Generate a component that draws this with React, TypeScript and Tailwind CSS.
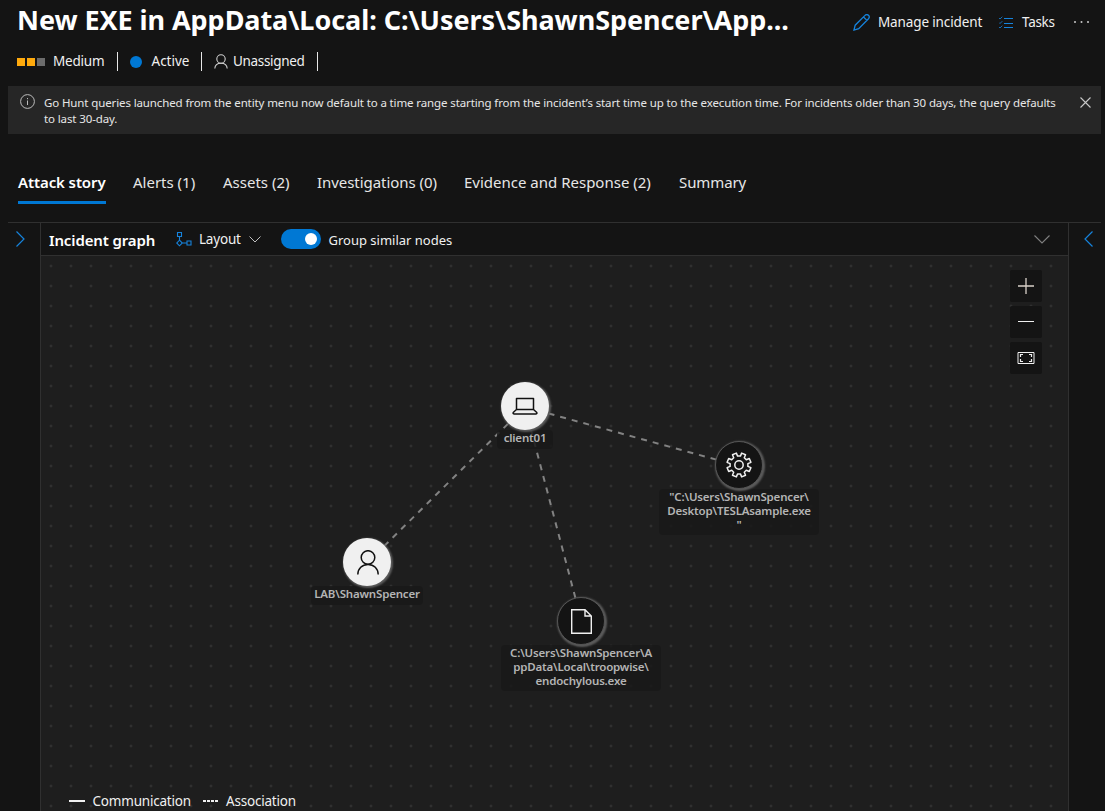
import React from "react";

const tabs = [
  { label: "Attack story", cls: "w-[88px] font-semibold text-white tracking-[-0.1px]", active: true },
  { label: "Alerts (1)", cls: "w-[63px]", active: false },
  { label: "Assets (2)", cls: "w-[67px]", active: false },
  { label: "Investigations (0)", cls: "w-[120px] tracking-[-0.05px]", active: false },
  { label: "Evidence and Response (2)", cls: "w-[188px]", active: false },
  { label: "Summary", cls: "w-[67px] tracking-[-0.1px]", active: false },
];

type NodeProps = {
  pos: string;
  light?: boolean;
  lines: string[];
  labelCls: string;
  children: React.ReactNode;
};

function GraphNode({ pos, light, lines, labelCls, children }: NodeProps) {
  return (
    <div className={`absolute flex w-[160px] flex-col items-center ${pos}`}>
      <div
        className={`relative z-10 flex h-[48px] w-[48px] items-center justify-center rounded-full shadow-[1px_1px_2px_1px_#5c5c5c] ${
          light ? "bg-[#f0f0f0] text-[#111]" : "border border-[#555] bg-[#141414] text-[#f0f0f0]"
        }`}
      >
        {children}
      </div>
      <div
        className={`rounded-[4px] bg-[#191919]/85 text-center text-[11.5px] font-semibold leading-[14px] tracking-[-0.18px] text-[#b4b4b4] ${labelCls}`}
      >
        {lines.map((l) => (
          <div key={l} className="whitespace-nowrap">
            {l}
          </div>
        ))}
      </div>
    </div>
  );
}

function Divider() {
  return <span className="h-[19px] w-px shrink-0 bg-[#e8e8e8]" />;
}

function Header() {
  return (
    <header className="flex h-[42px] items-start pl-[17px]">
      <h1 className="w-[775px] whitespace-nowrap text-[27px] font-bold leading-[40px] tracking-[-0.06px] text-white">
        New EXE in AppData\Local: C:\Users\ShawnSpencer\App...
      </h1>
      <div className="flex h-[44px] items-center pl-[61px] text-[14px] text-[#f0f0f0]">
        <svg className="h-[17px] w-[17px] text-[#1683dc]" viewBox="0 0 17 17" fill="none" stroke="currentColor" strokeWidth="1.300">
          <path d="M1 16l1.200-4.800L12 1.400a2.300 2.300 0 0 1 3.500 3.300L5.700 14.600zM10.500 3l3.500 3.400" />
        </svg>
        <span className="ml-[8px] w-[104px] whitespace-nowrap text-[13.5px] tracking-[-0.13px]">Manage incident</span>
        <svg className="ml-[17px] h-[13px] w-[14px] text-[#1683dc]" viewBox="0 0 14 13" fill="none" stroke="currentColor">
          <path d="M5 2.500h9M5 7.500h9M5 11.500h9" />
          <path d="M0 2l1 1 2.300-2.300M0 6.500l1 1 2.300-2.300M0 11l1 1 2.300-2.300" strokeWidth=".8" />
        </svg>
        <span className="ml-[9px] w-[33px] whitespace-nowrap text-[13.5px] tracking-[-0.3px]">Tasks</span>
        <svg className="ml-[18px] h-[4px] w-[18px] fill-[#c8c8c8]" viewBox="0 0 18 4">
          <circle cx="2" cy="2" r="1" />
          <circle cx="8.500" cy="2" r="1" />
          <circle cx="15" cy="2" r="1" />
        </svg>
      </div>
    </header>
  );
}

function StatusRow() {
  return (
    <div className="flex h-[38px] items-center pl-[17px] text-[13.5px] text-[#f0f0f0]">
      <span className="mt-px flex gap-[2px]">
        <i className="h-2 w-2 bg-[#ffaa0d]" />
        <i className="h-2 w-2 bg-[#ffaa0d]" />
        <i className="h-2 w-2 bg-[#6c6c6c]" />
      </span>
      <span className="ml-2 w-[64px] tracking-[-0.2px]">Medium</span>
      <Divider />
      <i className="ml-[12px] mt-px h-[12px] w-[12px] rounded-full bg-[#0078d4]" />
      <span className="ml-[9.500px] w-[49.500px]">Active</span>
      <Divider />
      <svg className="ml-[12px] h-[15px] w-[14px]" viewBox="0 0 14 15" fill="none" stroke="#d0d0d0" strokeWidth="1.1">
        <circle cx="7" cy="5" r="4.200" />
        <path d="M.8 14.500C1 11.200 3.500 9.200 7 9.200s6 2 6.200 5.300" />
      </svg>
      <span className="ml-[5px] w-[84px] tracking-[-0.32px]">Unassigned</span>
      <Divider />
    </div>
  );
}

function Banner() {
  return (
    <div className="ml-2 mr-1 mt-[6px] flex h-[48px] bg-[#262626] text-[#e6e6e6]">
      <svg className="ml-[12px] mt-[8px] h-[15px] w-[15px]" viewBox="0 0 15 15" fill="none" stroke="#bdbdbd">
        <circle cx="7.500" cy="7.500" r="6.900" />
        <path d="M7.500 6.500v4.500M7.500 4v1.200" />
      </svg>
      <p className="ml-[9px] mt-[9px] w-[1030px] whitespace-nowrap text-[11.5px] leading-[16px] tracking-[-0.118px]">
        Go Hunt queries launched from the entity menu now default to a time range starting from the incident’s start
        time up to the execution time. For incidents older than 30 days, the query defaults
        <br />
        to last 30-day.
      </p>
      <svg className="ml-[6px] mt-[11px] h-[11px] w-[11px]" viewBox="0 0 11 11" stroke="#c8c8c8" strokeWidth="1.1">
        <path d="M.5.5l10 10M10.500.5l-10 10" />
      </svg>
    </div>
  );
}

function Tabs() {
  return (
    <nav className="mt-[34px] flex h-[54px] gap-[27px] pl-[18px] text-[15px] text-[#e6e6e6]">
      {tabs.map((t) => (
        <div key={t.label} className={`flex h-[36px] flex-col whitespace-nowrap ${t.cls}`}>
          <span className="h-[33px] leading-[28px]">{t.label}</span>
          {t.active && <span className="h-[3px] bg-[#0078d4]" />}
        </div>
      ))}
    </nav>
  );
}

function Toolbar() {
  return (
    <div className="flex h-[33px] shrink-0 items-center border-b border-[#303030] pl-[8px] text-[13.5px] text-[#f0f0f0]">
      <span className="mt-[2px] w-[107px] whitespace-nowrap text-[15px] font-semibold tracking-[-0.13px] text-white">
        Incident graph
      </span>
      <svg className="ml-[20px] h-[16px] w-[16px] text-[#1683dc]" viewBox="0 0 16 16" fill="none" stroke="currentColor" strokeWidth="1.1">
        <path d="M1.500 1.500h4v4h-4zM11 10h4v4h-4zM3.500 5.500v3.800M6.300 12H11M3.500 9.200L6.300 12 3.500 14.800.7 12z" />
      </svg>
      <span className="ml-[7px] w-[43px] tracking-[-0.2px]">Layout</span>
      <svg className="ml-[7px] h-[7px] w-[12px]" viewBox="0 0 12 7" fill="none" stroke="#c0c0c0">
        <path d="M.5.5L6 6 11.500.5" />
      </svg>
      <span className="ml-[20px] flex h-[20px] w-[40px] items-center justify-end rounded-full bg-[#0078d4] pr-[4px]">
        <i className="h-[12px] w-[12px] rounded-full bg-white" />
      </span>
      <span className="ml-[7.500px] mt-[3px] whitespace-nowrap text-[13px]">Group similar nodes</span>
      <svg className="ml-auto mr-[18px] h-[9px] w-[16px]" viewBox="0 0 16 9" fill="none" stroke="#808080" strokeWidth="1.1">
        <path d="M.5.5L8 8 15.500.5" />
      </svg>
    </div>
  );
}

function ZoomControls() {
  const cls = "flex h-[32px] w-[32px] items-center justify-center rounded-[2px] bg-[#141414]";
  return (
    <div className="absolute right-[26px] top-[14px] flex flex-col gap-[4px]">
      <button className={cls}>
        <svg className="h-[16px] w-[16px]" viewBox="0 0 16 16" stroke="#d8d0c8" strokeWidth="1.3">
          <path d="M8 0v16M0 8h16" />
        </svg>
      </button>
      <button className={cls}>
        <svg className="h-[16px] w-[16px]" viewBox="0 0 16 16" stroke="#f0f0f0">
          <path d="M0 7.500h16" />
        </svg>
      </button>
      <button className={cls}>
        <svg className="h-[12px] w-[18px]" viewBox="0 0 18 12" fill="none" stroke="#f0f0f0">
          <path d="M1 .5h16v11H1z" />
          <path d="M3.500 5V2.500H6M12 2.500h2.500V5M14.500 7v2.500H12M6 9.500H3.500V7" strokeWidth="1.200" />
        </svg>
      </button>
    </div>
  );
}

function gearPath(teeth: number, outer: number, inner: number) {
  const pts: string[] = [];
  const step = (Math.PI * 2) / teeth;
  for (let i = 0; i < teeth; i++) {
    const a = (i + 0.5) * step - Math.PI / 2;
    [
      [-0.3, inner],
      [-0.22, outer],
      [0.22, outer],
      [0.3, inner],
    ].forEach(([o, r]) => {
      const t = a + o * step;
      pts.push(`${(13 + r * Math.cos(t)).toFixed(2)} ${(13 + r * Math.sin(t)).toFixed(2)}`);
    });
  }
  return `M${pts.join("L")}Z`;
}

function Canvas() {
  return (
    <div className="relative flex-1 overflow-hidden bg-[#1e1e1e] bg-[radial-gradient(circle,#303030_1px,transparent_1.8px)] bg-[size:20px_20px]">
      <svg className="absolute inset-0 h-full w-full" fill="none" stroke="#828282" strokeWidth="2" strokeDasharray="6 6">
        <path d="M326 307L484 151" />
        <path d="M540.500 365L484 151" />
        <path d="M698.500 210L484 151" />
      </svg>
      <GraphNode pos="left-[404px] top-[126px]" light lines={["client01"]} labelCls="px-[7px] pt-px pb-[4px]">
        <svg className="h-[20px] w-[26px]" viewBox="0 0 26 20" fill="none" stroke="currentColor" strokeWidth="1.500" strokeLinejoin="round">
          <path d="M4.500 2.500h17v11h-17zM4.500 13.500l-3.300 3c-.4.800.2 1.500 1 1.500h21.600c.800 0 1.400-.7 1-1.500l-3.300-3" />
        </svg>
      </GraphNode>
      <GraphNode pos="left-[246px] top-[282px]" light lines={["LAB\\ShawnSpencer"]} labelCls="w-[112px] pt-px pb-[4px]">
        <svg className="ml-px h-[25px] w-[22px]" viewBox="0 0 22 25" fill="none" stroke="currentColor" strokeWidth="1.500">
          <circle cx="11" cy="7.500" r="6.800" />
          <path d="M.8 24.500C.8 18.500 5.200 14.400 11 14.400s10.200 4.100 10.200 10.100" />
        </svg>
      </GraphNode>
      <GraphNode
        pos="left-[460px] top-[341px]"
        lines={["C:\\Users\\ShawnSpencer\\A", "ppData\\Local\\troopwise\\", "endochylous.exe"]}
        labelCls="w-[160px] pt-px pb-[3px]"
      >
        <svg className="h-[25px] w-[21px]" viewBox="0 0 21 25" fill="none" stroke="currentColor" strokeWidth="1.400">
          <path d="M.7.7h13.300l6.300 6.300v17.300H.7zM14 .7V7h6.300" />
        </svg>
      </GraphNode>
      <GraphNode
        pos="left-[618px] top-[185px]"
        lines={['"C:\\Users\\ShawnSpencer\\', "Desktop\\TESLAsample.exe", '"']}
        labelCls="w-[160px] pt-px pb-[3px]"
      >
        <svg className="h-[26px] w-[26px]" viewBox="0 0 26 26" fill="none" stroke="currentColor" strokeWidth="1.500" strokeLinejoin="round">
          <path d={gearPath(8, 12.2, 9)} />
          <circle cx="13" cy="13" r="4.200" />
        </svg>
      </GraphNode>
      <ZoomControls />
      <div className="absolute bottom-0 left-[28px] flex h-[20px] items-center text-[13.5px] tracking-[-0.2px] text-[#f0f0f0]">
        <i className="h-[2px] w-[16px] bg-[#f0f0f0]" />
        <span className="ml-[7.500px] w-[109.500px]">Communication</span>
        <span className="ml-px flex gap-px">
          <i className="h-[2px] w-[3px] bg-[#f0f0f0]" />
          <i className="h-[2px] w-[3px] bg-[#f0f0f0]" />
          <i className="h-[2px] w-[3px] bg-[#f0f0f0]" />
          <i className="h-[2px] w-[3px] bg-[#f0f0f0]" />
        </span>
        <span className="ml-[8px]">Association</span>
      </div>
    </div>
  );
}

export default function App() {
  return (
    <div className="flex h-[811px] w-[1105px] flex-col overflow-hidden bg-[#141414] font-['Noto_Sans','Open_Sans',sans-serif]">
      <Header />
      <StatusRow />
      <Banner />
      <Tabs />
      <main className="ml-2 mr-1 flex min-h-0 flex-1 border-t border-[#303030]">
        <aside className="w-[32px] shrink-0">
          <svg className="ml-[8px] mt-[8px] h-[16px] w-[9px]" viewBox="0 0 9 16" fill="none" stroke="#1683dc" strokeWidth="1.200">
            <path d="M.5.5L8 8 .5 15.500" />
          </svg>
        </aside>
        <section className="flex w-[1029px] shrink-0 flex-col border-x border-[#303030]">
          <Toolbar />
          <Canvas />
        </section>
        <aside className="flex-1">
          <svg className="ml-[15px] mt-[8px] h-[16px] w-[9px]" viewBox="0 0 9 16" fill="none" stroke="#1683dc" strokeWidth="1.200">
            <path d="M8.500.5L1 8l7.500 7.500" />
          </svg>
        </aside>
      </main>
    </div>
  );
}
